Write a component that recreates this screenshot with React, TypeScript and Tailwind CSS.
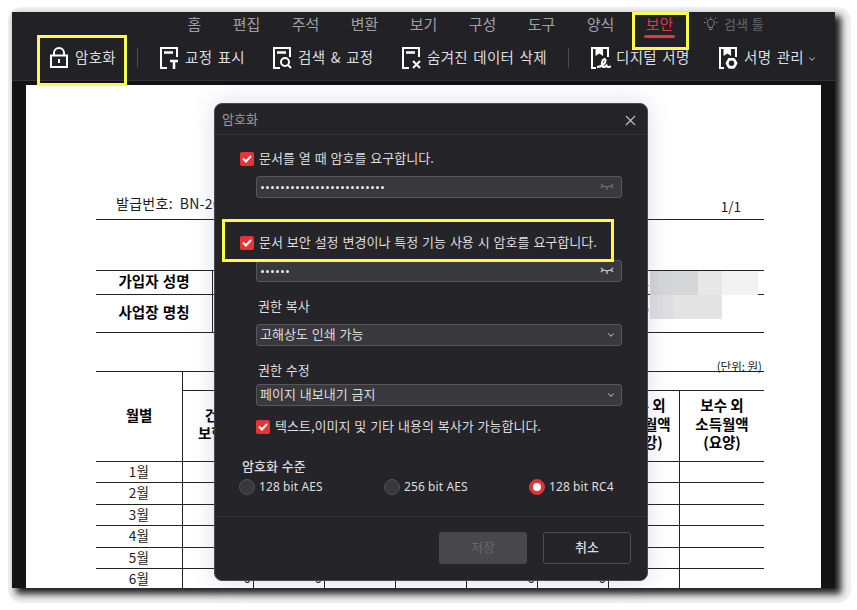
import clsx from "clsx";
import { ChevronDown, X } from "lucide-react";
import { type ReactNode, useState } from "react";

const tabs = ["편집", "주석", "변환", "보기", "구성", "도구", "양식"];
const months = ["1월", "2월", "3월", "4월", "5월", "6월"];
const juneAmounts = ["0", "0", "", "", "0", "0", "", ""];
const levels = ["128 bit AES", "256 bit AES", "128 bit RC4"];

const LockIcon = () => (
  <svg width="18" height="22" viewBox="0 0 18 22" fill="none" stroke="#fff" strokeWidth="2">
    <path d="M1 8.5h16V20H1z" />
    <path d="M4 8.5V6a5 5 0 0 1 10 0v2.5M9 12v4" />
  </svg>
);

const DocIcon = ({ children }: { children: ReactNode }) => (
  <svg width="20" height="22" viewBox="0 0 20 22" fill="none" stroke="#fff" strokeWidth="2">
    <path d="M7 21H1V1h16v9" />
    {children}
  </svg>
);

const BookIcon = ({ children }: { children: ReactNode }) => (
  <svg width="20" height="22" viewBox="0 0 20 22" fill="none" stroke="#fff" strokeWidth="2">
    <path d="M5 21H1V1h4M12 1h5v9" />
    <path d="M4.5 0H12v9L8.5 6.5 4.5 9z" fill="#fff" stroke="none" />
    {children}
  </svg>
);

const BulbIcon = () => (
  <svg width="15" height="16" viewBox="0 0 15 16" fill="none" stroke="#858589" strokeWidth="1">
    <path d="M6 11.5V10a3.600 3.600 0 1 1 3.500 0v1.500zM6 13.500h3.500M7.700 1v1.500M1 6.500h1.500M13 6.500h1.500M2.500 1.800l1.200 1.200M13 1.800l-1.200 1.200" />
  </svg>
);

const EyeClosed = ({ className }: { className: string }) => (
  <svg width="14" height="8" viewBox="0 0 14 8" fill="none" strokeWidth="1.200" className={className}>
    <path d="M1 .8c2.500 4 9.500 4 12 0M3 3 1 5M11 3l2 2M7 4v3" />
  </svg>
);

function Tool({ icon, label, className }: { icon: ReactNode; label: string; className: string }) {
  return (
    <div className={clsx("flex items-center shrink-0", className)}>
      <span className="w-[25px] shrink-0">{icon}</span>
      <span className="-mt-0.5 whitespace-nowrap text-[14.500px] tracking-[0.300px] [word-spacing:1.800px] text-[#dedee0]">
        {label}
      </span>
    </div>
  );
}

const Divider = () => <div className="w-px h-5 mr-[22px] bg-[#4d4d51] shrink-0" />;

function Checkbox({ label }: { label: string }) {
  return (
    <label className="flex items-center h-3.5 gap-[5px] whitespace-nowrap">
      <span className="flex items-center justify-center size-3.5 rounded-[2px] bg-[#e53337] shrink-0">
        <svg width="10" height="8" viewBox="0 0 10 8" fill="none" stroke="#fff" strokeWidth="2">
          <path d="m1 3.500 3 3L9 1" />
        </svg>
      </span>
      <span className="-mt-0.5">{label}</span>
    </label>
  );
}

function Field({ children, className }: { children: ReactNode; className: string }) {
  return (
    <div
      className={clsx(
        "flex items-center justify-between w-[366px] h-[22px] ml-4 pl-[3px] rounded-[3px] border border-[#57575b] bg-[#39383d]",
        className
      )}
    >
      {children}
    </div>
  );
}

const Dots = ({ count }: { count: number }) => (
  <div className="flex gap-[2px] pl-px">
    {Array.from({ length: count }).map((_, i) => (
      <span key={i} className="size-[3px] rounded-full bg-[#f0f0f0]" />
    ))}
  </div>
);

function Toolbar() {
  return (
    <div className="h-[69px] bg-[#222126] border-b border-[#343338]">
      <div className="flex items-center h-[23px] pl-40 text-[15px] leading-[23px] text-[#a0a0a3]">
        <span className="w-[45px] text-center">홈</span>
        {tabs.map((tab) => (
          <span key={tab} className="w-[59px] text-center">
            {tab}
          </span>
        ))}
        <div className="flex flex-col items-center w-[59px] h-[23px] text-[#dc3c40]">
          <span className="h-[23px] shrink-0">보안</span>
          <span className="w-[31px] h-[3px] rounded-full bg-[#dc3c40] shrink-0" />
        </div>
        <div className="flex items-center ml-[14px] gap-1.5 text-[13px] text-[#66666a] [word-spacing:1px]">
          <BulbIcon />
          <span>검색 툴</span>
        </div>
      </div>
      <div className="flex items-center h-[46px] pl-[38px]">
        <Tool className="w-[87px]" icon={<LockIcon />} label="암호화" />
        <Divider />
        <Tool
          className="w-[113px]"
          label="교정 표시"
          icon={
            <DocIcon>
              <path d="M4 5.500h9M10 14h8M14 14v8" strokeWidth="2.500" />
            </DocIcon>
          }
        />
        <Tool
          className="w-[129px]"
          label="검색 & 교정"
          icon={
            <DocIcon>
              <path d="M4 5.500h9" strokeWidth="2.500" />
              <circle cx="12" cy="15" r="4" />
              <path d="m15 18 3 3" />
            </DocIcon>
          }
        />
        <Tool
          className="w-[166px]"
          label="숨겨진 데이터 삭제"
          icon={
            <DocIcon>
              <path d="M4 5.500h9" strokeWidth="2.500" />
              <path d="m11 14 7 7M18 14l-7 7" />
            </DocIcon>
          }
        />
        <Divider />
        <Tool
          className="w-[128px]"
          label="디지털 서명"
          icon={
            <BookIcon>
              <path d="M6 20c5 0 9-4 8.500-7-.5-2-3-.5-3.500 2.500-.7 4.500 1.500 6 4.500 3 .5 2 2 2 4.500.5" />
            </BookIcon>
          }
        />
        <Tool
          className="w-[86px]"
          label="서명 관리"
          icon={
            <BookIcon>
              <path d="M9.500 11h6l3 5.200-3 5.200h-6l-3-5.200z" fill="#fff" stroke="none" />
              <circle cx="12.500" cy="16.200" r="4" strokeWidth="2.500" fill="#222126" />
            </BookIcon>
          }
        />
        <ChevronDown size={10} strokeWidth={2.5} className="ml-[2px] mt-[2px] text-[#b5b5b8] shrink-0" />
      </div>
    </div>
  );
}

function HeadCell({ lines }: { lines: string[] }) {
  return (
    <div className="flex flex-col justify-center items-center h-[70px] pb-1 text-[14.500px] leading-[18.500px] font-bold text-black border-l border-[#222]">
      {lines.map((line, i) => (
        <span key={i} className="whitespace-nowrap">
          {line}
        </span>
      ))}
    </div>
  );
}

function DocumentPage() {
  return (
    <div className="w-[795px] h-[503px] ml-[14px] mt-1 pl-[70px] pt-[108px] bg-white text-[#1c1c1c] overflow-hidden">
      <div className="w-[668px]">
        <div className="flex justify-between h-[27px] pl-5 pr-[23px] border-b border-[#222] text-[14px] leading-[20px]">
          <span className="whitespace-pre tracking-[0.300px]">발급번호:  BN-2023</span>
          <span className="pt-[3px] text-[13.500px]">1/1</span>
        </div>
        <div className="h-[50px]" />

        <div className="border-y border-[#222]">
          {["가입자 성명", "사업장 명칭"].map((name, i) => (
            <div
              key={name}
              className={clsx("flex items-center", i === 0 ? "h-6 border-b border-[#222]" : "h-[37px]")}
            >
              <div className="w-[117px] h-full flex items-center justify-center pb-[3px] border-r border-[#222] text-[14.500px] font-bold text-black [word-spacing:1px]">
                {name}
              </div>
              <div className="flex self-start ml-auto">
                <span className="pt-1 pr-px text-[13px] leading-[18px]">{i === 0 ? "-" : "5"}</span>
                {i === 0 ? (
                  <div className="flex h-6">
                    <div className="w-12 bg-[#d5d6d7]" />
                    <div className="w-6 bg-[#e7e7e7]" />
                    <div className="w-9 mr-1.5 bg-[#f2f2f2]" />
                  </div>
                ) : (
                  <div className="flex h-6 mr-[42px]">
                    <div className="w-6 bg-[#dfdfe1]" />
                    <div className="w-12 bg-[#e4e4e5]" />
                  </div>
                )}
              </div>
            </div>
          ))}
        </div>

        <div className="h-[38px] pt-[25px] pr-0.5 text-right text-[11.500px] leading-4">(단위: 원)</div>

        <div className="grid grid-cols-[86px_1fr] border-t border-[#222]">
          <div className="flex items-center justify-center h-[89px] pb-1 text-[14.500px] font-bold text-black">
            월별
          </div>
          <div className="border-l border-[#222]">
            <div className="h-[18px]" />
            <div className="-ml-px grid grid-cols-[repeat(7,71px)_1fr] border-t border-[#222]">
              <HeadCell lines={["건강", "보험료"]} />
              <HeadCell lines={[]} />
              <HeadCell lines={[]} />
              <HeadCell lines={[]} />
              <HeadCell lines={[]} />
              <HeadCell lines={[]} />
              <HeadCell lines={["보수 외", "소득월액", "(건강)"]} />
              <HeadCell lines={["보수 외", "소득월액", "(요양)"]} />
            </div>
          </div>
        </div>
        {months.map((month, row) => (
          <div
            key={month}
            className="grid grid-cols-[86px_repeat(7,71px)_1fr] h-[21.400px] border-t border-[#222] text-[13.500px] leading-[18px]"
          >
            <span className="text-center tracking-[0.300px]">{month}</span>
            {juneAmounts.map((amount, i) => (
              <span key={i} className="pr-[2px] text-right leading-4 border-l border-[#222]">
                {row === 5 && amount}
              </span>
            ))}
          </div>
        ))}
      </div>
    </div>
  );
}

function EncryptDialog() {
  const [level, setLevel] = useState("128 bit RC4");

  return (
    <div className="absolute left-[202px] top-[91px] w-[434px] h-[478px] rounded-lg border border-[#4a494e] bg-[#252429] shadow-[0_0_24px_rgba(80,90,150,0.2)] text-[13px] text-[#dededf] [word-spacing:1px]">
      <div className="flex items-center justify-between h-[31px] pl-[7px] pr-2 border-b border-[#343338] text-[#9b9b9e]">
        <span className="-mt-px">암호화</span>
        <X size={17} strokeWidth={1.5} className="mt-0.5 text-[#c3c3c5]" />
      </div>

      <div className="pl-[25px] pt-[17px]">
        <Checkbox label="문서를 열 때 암호를 요구합니다." />
        <Field className="mt-2.5 pr-[7px]">
          <Dots count={25} />
          <EyeClosed className="stroke-[#727276]" />
        </Field>
        <div className="mt-[38px]">
          <Checkbox label="문서 보안 설정 변경이나 특정 기능 사용 시 암호를 요구합니다." />
        </div>
        <Field className="mt-2.5 pr-[7px]">
          <Dots count={6} />
          <EyeClosed className="stroke-[#d0d0d2]" />
        </Field>

        <div className="mt-3.5 h-5 ml-[18px] leading-5">권한 복사</div>
        <Field className="mt-2 pr-[5px]">
          <span className="-mt-0.5">고해상도 인쇄 가능</span>
          <ChevronDown size={10} strokeWidth={2.5} className="text-[#b5b5b7]" />
        </Field>
        <div className="mt-3.5 h-5 ml-[18px] leading-5">권한 수정</div>
        <Field className="mt-1 pr-[5px]">
          <span className="-mt-0.5">페이지 내보내기 금지</span>
          <ChevronDown size={10} strokeWidth={2.5} className="text-[#b5b5b7]" />
        </Field>
        <div className="mt-3.5 ml-4">
          <Checkbox label="텍스트,이미지 및 기타 내용의 복사가 가능합니다." />
        </div>

        <div className="mt-[22px] h-5 ml-0.5 leading-5 font-medium">암호화 수준</div>
        <div className="flex -ml-px mt-[3px]">
          {levels.map((item) => (
            <button
              key={item}
              onClick={() => setLevel(item)}
              className="flex items-center w-[145px] shrink-0 h-4 gap-1 font-['Noto_Sans'] text-[12px] tracking-[0.100px]"
            >
              <span
                className={clsx(
                  "flex items-center justify-center size-4 rounded-full border",
                  item === level ? "bg-[#df353a] border-[#df353a]" : "bg-[#39383d] border-[#535257]"
                )}
              >
                {item === level && <span className="size-2 rounded-full bg-white" />}
              </span>
              <span>{item}</span>
            </button>
          ))}
        </div>
      </div>

      <div className="flex justify-end gap-4 mt-[21px] pt-[15px] pr-4 border-t border-[#343338]">
        <button className="w-[88px] h-8 pb-0.5 rounded-[3px] bg-[#48474a] text-[#69696c]">저장</button>
        <button className="w-[88px] h-8 pb-0.5 rounded-[3px] border border-[#505054] font-medium">취소</button>
      </div>
    </div>
  );
}

export default function App() {
  return (
    <div className="w-[857px] h-[610px] p-2 pt-[7px] bg-white overflow-hidden font-['Noto_Sans_CJK_KR',sans-serif]">
      <div className="w-[843px] h-[596px] pl-1 pt-[5px] rounded-[14px] bg-[#f0f0f0]">
        <div className="relative w-[823px] h-[576px] bg-[#131315] shadow-[5px_5px_7px_1px_#000000e0]">
          <Toolbar />
          <DocumentPage />
          <EncryptDialog />
          <div className="absolute left-[25px] top-[23px] w-[90px] h-[51px] border-3 border-[#fbfb4a]" />
          <div className="absolute left-[620px] top-0 w-[57px] h-[38px] border-3 border-[#fbfb4a]" />
          <div className="absolute left-[210px] top-[207px] w-[392px] h-[43px] border-3 border-[#fbfb4a]" />
        </div>
      </div>
    </div>
  );
}
